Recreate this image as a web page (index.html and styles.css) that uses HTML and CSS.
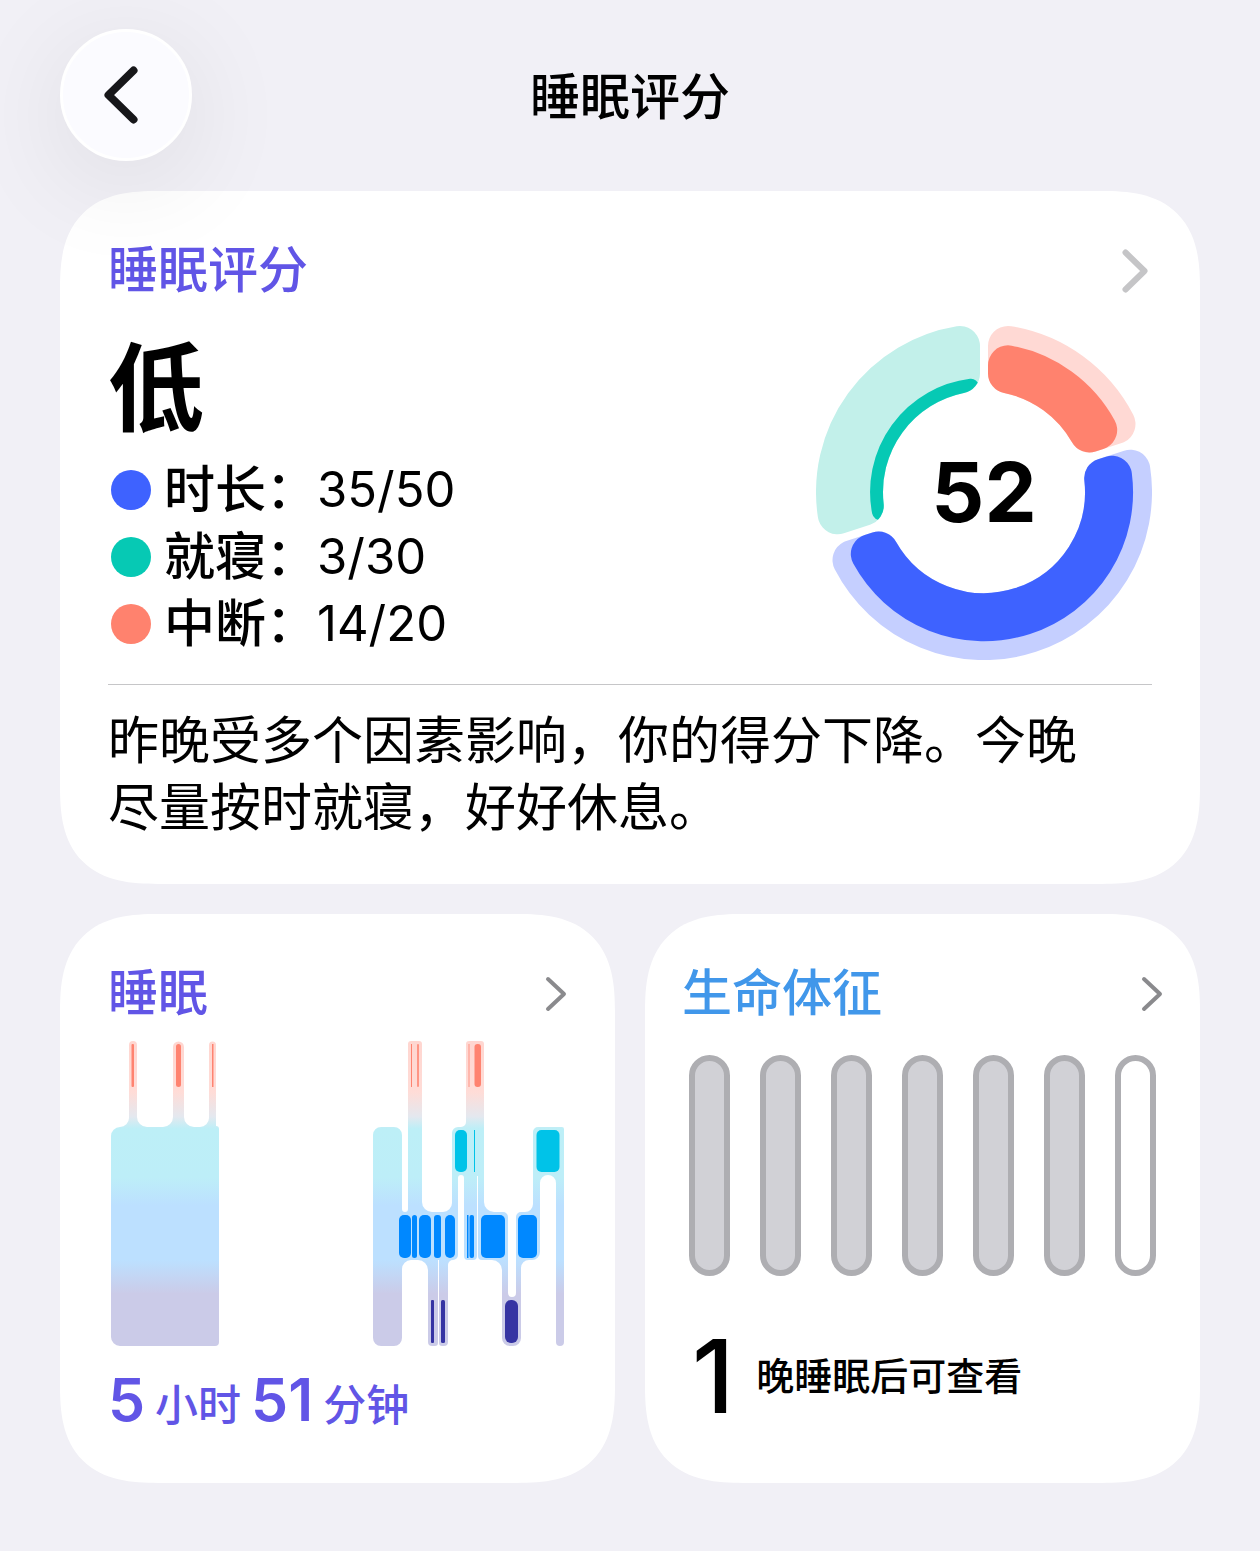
FILE: index.html
```html
<!DOCTYPE html>
<html lang="zh-CN">
<head>
  <meta charset="utf-8">
  <meta name="viewport" content="width=device-width, initial-scale=1">
  <title>睡眠评分</title>
  <link rel="stylesheet" href="styles.css">
</head>
<body>
  <header class="topbar">
    <button class="back" type="button" aria-label="返回">
      <svg class="back-icon" viewBox="0 0 34 58" aria-hidden="true"><path d="M29.500 4.500 4.500 29 29.500 53.500"/></svg>
    </button>
    <h1 class="page-title">睡眠评分</h1>
  </header>

  <main class="content">
    <section class="card score">
      <a class="card-head violet" href="#score">
        <h2 class="card-title">睡眠评分</h2>
        <svg class="chevron chevron-large" viewBox="0 0 26 44" aria-hidden="true"><path d="M3.500 3.500 22.500 22 3.500 40.500"/></svg>
      </a>
      <div class="score-body">
        <div class="score-info">
          <p class="rating">低</p>
          <ul class="factors">
            <li class="factor"><span class="dot dot-blue"></span><span class="factor-name">时长：</span><span class="factor-value">35/50</span></li>
            <li class="factor"><span class="dot dot-green"></span><span class="factor-name">就寝：</span><span class="factor-value">3/30</span></li>
            <li class="factor"><span class="dot dot-coral"></span><span class="factor-name">中断：</span><span class="factor-value">14/20</span></li>
          </ul>
        </div>
        <div class="donut">
          <svg class="donut-chart" viewBox="0 0 336 336" aria-hidden="true">
            <defs>
              <path id="bedtime" d="M21.700 190.300A148 148 0 0 1 144 22V49.400A121 121 0 0 0 47.800 181.800Z"/>
              <mask id="bedtime-mask" maskUnits="userSpaceOnUse" x="0" y="0" width="336" height="336">
                <use class="mask-shape" href="#bedtime"/>
              </mask>
            </defs>
            <use class="seg green-soft" href="#bedtime"/>
            <g mask="url(#bedtime-mask)"><path class="bedtime-fill" d="M64 188.100A106 106 0 0 1 155 62.800"/></g>
            <path class="seg coral-soft" d="M192 22A148 148 0 0 1 299.500 100L273.400 108.500A121 121 0 0 0 192 49.400Z"/>
            <path class="seg coral" d="M192 41.300A129 129 0 0 1 281.200 106L273.400 108.500A121 121 0 0 0 192 49.400Z"/>
            <path class="seg blue-soft" d="M314.300 145.700A148 148 0 0 1 36.500 236L62.600 227.500A121 121 0 0 0 288.200 154.200Z"/>
            <path class="seg blue" d="M296 151.700A129 129 0 0 1 54.800 230L62.600 227.500A121 121 0 0 0 288.200 154.200Z"/>
          </svg>
          <strong class="donut-value">52</strong>
        </div>
      </div>
      <p class="advice">昨晚受多个因素影响，你的得分下降。今晚尽量按时就寝，好好休息。</p>
    </section>

    <div class="pair">
      <section class="card sleep">
        <a class="card-head violet" href="#sleep">
          <h2 class="card-title">睡眠</h2>
          <svg class="chevron" viewBox="0 0 22 36" aria-hidden="true"><path d="M3 3 19 18 3 33"/></svg>
        </a>
        <svg class="stages" viewBox="0 0 459 308" role="img" aria-label="睡眠阶段">
          <defs>
            <linearGradient id="stage-wash" gradientUnits="userSpaceOnUse" x1="0" y1="0" x2="0" y2="306">
              <stop offset="0" stop-color="#ffd6d0"/>
              <stop offset=".17" stop-color="#ffdcd7"/>
              <stop offset=".25" stop-color="#e4e8ef"/>
              <stop offset=".29" stop-color="#bdeff7"/>
              <stop offset=".45" stop-color="#bdeef8"/>
              <stop offset=".54" stop-color="#bce0ff"/>
              <stop offset=".72" stop-color="#bce0ff"/>
              <stop offset=".83" stop-color="#cbcbe8"/>
              <stop offset="1" stop-color="#cbcbe8"/>
            </linearGradient>
          </defs>
          <g fill="url(#stage-wash)">
            <path d="M3 96a9 9 0 0 1 9-9a9 9 0 0 0 9-9V5a4 4 0 0 1 8 0V77a10 10 0 0 0 10 10H55a10 10 0 0 0 10-10V7a5.500 5.500 0 0 1 11 0V77a10 10 0 0 0 10 10H92a9 9 0 0 0 9-9V5a3.500 3.500 0 0 1 7 0V86a3 3 0 0 1 3 3V302a4 4 0 0 1-4 4H12a9 9 0 0 1-9-9Z"/>
            <path d="M265 95a8 8 0 0 1 8-8H286a8 8 0 0 1 8 8V169a3 3 0 0 0 6 0V4a3 3 0 0 1 3-3H311a3 3 0 0 1 3 3V162a10 10 0 0 0 10 10H335a9 9 0 0 0 9-9V93a6 6 0 0 1 6-6h3a5 5 0 0 0 5-5V4a3 3 0 0 1 3-3H373a3 3 0 0 1 3 3V162a10 10 0 0 0 10 10H395a5 5 0 0 1 5 5V253a4 4 0 0 0 8 0V177a5 5 0 0 1 5-5h4a8 8 0 0 0 8-8V92a5 5 0 0 1 5-5H454a2 2 0 0 1 2 2V302a4 4 0 0 1-8 0V143a8 8 0 0 0-16 0V212a8 8 0 0 1-8 8H421a8 8 0 0 0-8 8V298a8 8 0 0 1-8 8h-3a8 8 0 0 1-8-8V230a10 10 0 0 0-10-10H374a4 4 0 0 1-4-4V136H369V216a4 4 0 0 1-4 4H360a4 4 0 0 1-4-4V138a3 3 0 0 0-6 0V215a5 5 0 0 1-5 5a5 5 0 0 0-5 5V302a4 4 0 0 1-4 4h-2a3 3 0 0 1-3-3V220h-1V303a3 3 0 0 1-3 3h-3a4 4 0 0 1-4-4V230a10 10 0 0 0-10-10H303a9 9 0 0 0-9 9V298a8 8 0 0 1-8 8H273a8 8 0 0 1-8-8Z"/>
          </g>
          <g fill="#ff8370">
            <rect x="23.500" y="4" width="2.500" height="43" rx="1"/>
            <rect x="68" y="4" width="5" height="43" rx="2.500"/>
            <rect x="104" y="4" width="1.500" height="43"/>
            <rect x="303" y="4" width="1" height="43"/>
            <rect x="309" y="4" width="2" height="43" rx="1" opacity=".8"/>
            <rect x="360.500" y="4" width="1" height="43" opacity=".8"/>
            <rect x="366.500" y="4" width="6.500" height="43" rx="3"/>
          </g>
          <g fill="#00c3e8">
            <rect x="347" y="90" width="12" height="42" rx="5"/>
            <rect x="366" y="90" width="1" height="42"/>
            <rect x="428.500" y="90" width="23" height="42" rx="5"/>
          </g>
          <g fill="#0088ff">
            <rect x="291" y="175" width="12" height="43" rx="5"/>
            <rect x="304" y="175" width="5" height="43" rx="2.500"/>
            <rect x="311" y="175" width="12" height="43" rx="5"/>
            <rect x="326" y="175" width="7" height="43" rx="3"/>
            <rect x="337" y="175" width="10" height="43" rx="5"/>
            <rect x="359" y="175" width="1.500" height="43"/>
            <rect x="361.500" y="175" width="4.500" height="43" rx="2"/>
            <rect x="373" y="175" width="24" height="43" rx="5"/>
            <rect x="410" y="175" width="19" height="43" rx="5"/>
          </g>
          <g fill="#3634a3">
            <rect x="323" y="260" width="3" height="43" rx="1"/>
            <rect x="333" y="260" width="4" height="43" rx="1.500"/>
            <rect x="397" y="260" width="13" height="43" rx="6"/>
          </g>
        </svg>
        <p class="duration"><span class="figure">5</span><span>小时</span><span class="figure">51</span><span>分钟</span></p>
      </section>

      <section class="card vitals">
        <a class="card-head sky" href="#vitals">
          <h2 class="card-title">生命体征</h2>
          <svg class="chevron" viewBox="0 0 22 36" aria-hidden="true"><path d="M3 3 19 18 3 33"/></svg>
        </a>
        <div class="nights" role="img" aria-label="已记录 6 晚，共 7 晚">
          <span class="night recorded"></span>
          <span class="night recorded"></span>
          <span class="night recorded"></span>
          <span class="night recorded"></span>
          <span class="night recorded"></span>
          <span class="night recorded"></span>
          <span class="night"></span>
        </div>
        <p class="remaining"><span class="remaining-count">1</span><span>晚睡眠后可查看</span></p>
      </section>
    </div>
  </main>
</body>
</html>
```
FILE: styles.css
```css
* {
  box-sizing: border-box;
}

body {
  margin: 0;
  padding: 29px 60px 66px;
  background: #f1f0f6;
  color: #000;
  font-family: Inter, "Noto Sans CJK SC", sans-serif;
  font-size: 51px;
  line-height: 67px;
}

h1, h2, p, ul {
  margin: 0;
  padding: 0;
  font-size: inherit;
}

/* Top bar */

.topbar {
  position: relative;
  z-index: 1;
  display: grid;
  grid-template-columns: 132px 1fr 132px;
  align-items: center;
}

.back {
  display: grid;
  place-items: center;
  width: 132px;
  height: 132px;
  padding: 0 10px 0 0;
  border: 3px solid #fff;
  border-radius: 50%;
  background: #fbfbff;
  box-shadow: 0 20px 110px rgba(0, 0, 0, .09);
}

.back-icon {
  width: 34px;
  fill: none;
  stroke: #17171a;
  stroke-width: 8;
  stroke-linecap: round;
  stroke-linejoin: round;
}

.page-title {
  padding-top: 4px;
  font-size: 50px;
  font-weight: 500;
  text-align: center;
}

/* Cards */

.content,
.pair {
  display: grid;
  gap: 30px;
}

.content {
  margin-top: 30px;
}

.pair {
  grid-template-columns: 1fr 1fr;
}

.card {
  padding: 46px 48px 43px;
  border-radius: 76px;
  background: #fff;
}

@supports (corner-shape: squircle) {
  .card {
    border-radius: 98px;
    corner-shape: superellipse(1.4);
  }
}

.card-head {
  display: flex;
  align-items: center;
  justify-content: space-between;
  color: inherit;
  text-decoration: none;
}

.card-title {
  font-size: 50px;
  font-weight: 500;
}

.violet {
  color: #6155e6;
}

.sky {
  color: #4197ea;
}

.chevron {
  width: 22px;
  fill: none;
  stroke: #8a8a8d;
  stroke-width: 4;
  stroke-linecap: round;
  stroke-linejoin: round;
}

.chevron-large {
  width: 26px;
  margin-right: 4px;
  stroke: #c5c5c7;
  stroke-width: 6;
}

/* Score */

.score-body {
  display: flex;
  align-items: flex-end;
  justify-content: space-between;
  padding-bottom: 24px;
  border-bottom: 1px solid #c6c6c8;
}

.rating {
  margin-top: 30px;
  font-size: 96px;
  font-weight: 700;
  line-height: 108px;
}

.factors {
  margin: 14px 0 3px;
  list-style: none;
}

.factor {
  display: flex;
  align-items: center;
  padding-left: 3px;
}

.factor-name {
  font-weight: 500;
}

.factor-value {
  font-size: 49px;
}

.dot {
  width: 40px;
  height: 40px;
  margin-right: 13px;
  border-radius: 50%;
}

.dot-blue {
  background: #3e62ff;
}

.dot-green {
  background: #06c9b4;
}

.dot-coral {
  background: #ff826e;
}

.donut {
  display: grid;
  place-items: center;
  width: 336px;
}

.donut-chart,
.donut-value {
  grid-area: 1 / 1;
}

.donut-chart {
  display: block;
  width: 100%;
}

.donut-value {
  font-size: 83px;
  font-weight: 700;
}

.seg,
.mask-shape {
  stroke-width: 40;
  stroke-linejoin: round;
}

.mask-shape {
  fill: #fff;
  stroke: #fff;
}

.green-soft {
  fill: #c2f0ea;
  stroke: #c2f0ea;
}

.bedtime-fill {
  fill: none;
  stroke: #06c9b4;
  stroke-width: 16;
  stroke-linecap: round;
}

.coral-soft {
  fill: #ffd9d4;
  stroke: #ffd9d4;
}

.coral {
  fill: #ff826e;
  stroke: #ff826e;
}

.blue-soft {
  fill: #c5cfff;
  stroke: #c5cfff;
}

.blue {
  fill: #3e62ff;
  stroke: #3e62ff;
}

.advice {
  padding: 22px 60px 0 0;
}

/* Sleep stages */

.stages {
  display: block;
  width: 100%;
  margin-top: 13px;
}

.duration {
  display: flex;
  align-items: baseline;
  gap: 10px;
  margin-top: 17px;
  color: #6155e6;
  font-size: 43px;
  font-weight: 500;
  line-height: 69px;
}

.figure {
  font-size: 59px;
  font-weight: 600;
}

/* Vitals */

.vitals {
  padding-right: 37px;
  padding-left: 37px;
}

.nights {
  display: flex;
  justify-content: space-between;
  margin: 28px 7px 0;
}

.night {
  width: 41px;
  height: 221px;
  border: 6px solid #aeaeb2;
  border-radius: 21px;
}

.recorded {
  background: #d1d1d6;
}

.remaining {
  display: flex;
  align-items: center;
  gap: 22px;
  margin-top: 48px;
  padding-left: 10px;
  font-size: 38px;
  font-weight: 500;
  line-height: 104px;
}

.remaining-count {
  font-size: 102px;
}
```
